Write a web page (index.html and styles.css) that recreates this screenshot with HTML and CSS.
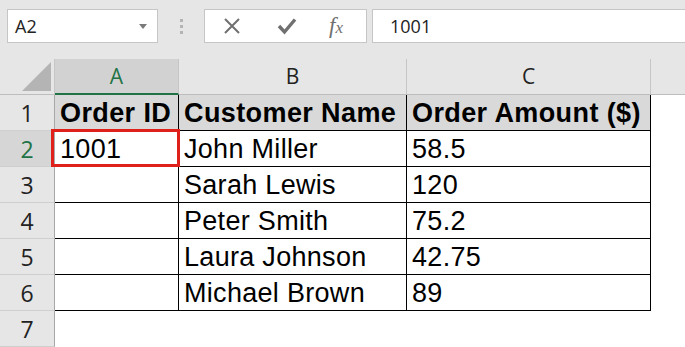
FILE: index.html
```html
<!DOCTYPE html>
<html lang="en">
<head>
    <meta charset="UTF-8">
    <meta name="viewport" content="width=device-width, initial-scale=1.0">
    <title>Orders - Sheet</title>
    <link rel="stylesheet" href="styles.css">
</head>
<body>
    <div class="formula-bar">
        <div class="name-box">
            <span>A2</span>
            <span class="drop-arrow"></span>
        </div>
        <div class="grip">
            <span></span><span></span><span></span>
        </div>
        <div class="fx-buttons">
            <svg class="btn-icon" width="18" height="18" viewBox="0 0 18 18">
                <path d="M2 2 L16 16 M16 2 L2 16" stroke="#707070" stroke-width="2" fill="none"/>
            </svg>
            <svg class="btn-icon" width="20" height="18" viewBox="0 0 20 18">
                <path d="M2 9 L7.5 15 L18 2.5" stroke="#707070" stroke-width="3.4" fill="none"/>
            </svg>
            <span class="fx">f<i>x</i></span>
        </div>
        <div class="formula-input">1001</div>
    </div>

    <div class="sheet">
        <!-- column headers -->
        <div class="corner"><span class="corner-tri"></span></div>
        <div class="col-head selected">A</div>
        <div class="col-head">B</div>
        <div class="col-head">C</div>
        <div class="col-head last"></div>

        <!-- row 1 -->
        <div class="row-head">1</div>
        <div class="cell head first">Order ID</div>
        <div class="cell head">Customer Name</div>
        <div class="cell head">Order Amount ($)</div>
        <div class="blank"></div>

        <!-- row 2 -->
        <div class="row-head selected">2</div>
        <div class="cell first active">1001</div>
        <div class="cell">John Miller</div>
        <div class="cell">58.5</div>
        <div class="blank"></div>

        <div class="row-head">3</div>
        <div class="cell first"></div>
        <div class="cell">Sarah Lewis</div>
        <div class="cell">120</div>
        <div class="blank"></div>

        <div class="row-head">4</div>
        <div class="cell first"></div>
        <div class="cell">Peter Smith</div>
        <div class="cell">75.2</div>
        <div class="blank"></div>

        <div class="row-head">5</div>
        <div class="cell first"></div>
        <div class="cell">Laura Johnson</div>
        <div class="cell">42.75</div>
        <div class="blank"></div>

        <div class="row-head">6</div>
        <div class="cell first"></div>
        <div class="cell">Michael Brown</div>
        <div class="cell">89</div>
        <div class="blank"></div>

        <div class="row-head">7</div>
        <div class="blank"></div>
        <div class="blank"></div>
        <div class="blank"></div>
        <div class="blank"></div>
    </div>
</body>
</html>
```

FILE: styles.css
```css
body {
    margin: 0;
    background-color: #ffffff;
    font-family: "Liberation Sans", Arial, sans-serif;
    overflow: hidden;
}
.formula-bar {
    display: flex;
    align-items: flex-start;
    height: 59px;
    padding: 9px 0 0 7px;
    box-sizing: border-box;
    background-color: #e6e6e6;
}
.name-box {
    width: 151px;
    height: 34px;
    box-sizing: border-box;
    background: white;
    border: 1px solid #c6c6c6;
    display: flex;
    align-items: center;
    justify-content: space-between;
    padding: 0 10px 0 7px;
    font-family: "Open Sans", sans-serif;
    font-size: 18px;
    color: #222;
}
.drop-arrow {
    width: 0;
    height: 0;
    border-left: 4px solid transparent;
    border-right: 4px solid transparent;
    border-top: 5px solid #7a7a7a;
}
.grip {
    width: 46px;
    height: 34px;
    display: flex;
    flex-direction: column;
    align-items: center;
    justify-content: center;
    gap: 3px;
}
.grip span {
    width: 3px;
    height: 3px;
    background: #b4b4b4;
}
.fx-buttons {
    width: 163px;
    height: 34px;
    box-sizing: border-box;
    background: white;
    border: 1px solid #c6c6c6;
    display: flex;
    align-items: center;
    padding-left: 18px;
}
.btn-icon {
    display: block;
}
.btn-icon + .btn-icon {
    margin-left: 36px;
}
.fx {
    margin-left: 32px;
    font-family: "Liberation Serif", serif;
    font-style: italic;
    font-size: 23px;
    color: #707070;
}
.fx i {
    font-size: 17px;
}
.formula-input {
    flex: 1;
    height: 34px;
    margin-left: 5px;
    box-sizing: border-box;
    background: white;
    border: 1px solid #c6c6c6;
    border-right: none;
    padding-left: 17px;
    line-height: 32px;
    font-family: "Open Sans", sans-serif;
    font-size: 18px;
    color: #222;
}
.sheet {
    display: grid;
    grid-template-columns: 55px 124px 228px 244px 1fr;
    grid-auto-rows: 36px;
}
.corner {
    background: #e6e6e6;
    border-right: 1px solid #c6c6c6;
    border-bottom: 1px solid #bdbdbd;
    box-sizing: border-box;
    display: flex;
    align-items: flex-end;
    justify-content: flex-end;
    padding: 0 3px 3px 0;
}
.corner-tri {
    width: 0;
    height: 0;
    border-left: 29px solid transparent;
    border-bottom: 29px solid #b4b4b4;
}
.col-head {
    background: #e6e6e6;
    border-right: 1px solid #c6c6c6;
    border-bottom: 1px solid #bdbdbd;
    box-sizing: border-box;
    text-align: center;
    line-height: 35px;
    font-family: "Open Sans", sans-serif;
    font-size: 21px;
    color: #222;
}
.col-head.selected {
    background: #d2d2d2;
    color: #217346;
    border-bottom: 2px solid #217346;
}
.col-head.last {
    border-right: none;
}
.row-head {
    background: #e6e6e6;
    border-right: 1px solid #a8a8a8;
    border-bottom: 1px solid #cfcfcf;
    box-sizing: border-box;
    text-align: center;
    line-height: 36px;
    font-family: "Open Sans", sans-serif;
    font-size: 23px;
    color: #222;
}
.row-head.selected {
    background: #d6d6d6;
    color: #217346;
}
.cell {
    border-right: 1px solid #000;
    border-bottom: 1px solid #000;
    box-sizing: border-box;
    padding-left: 5px;
    line-height: 36px;
    font-size: 27px;
    letter-spacing: 0.3px;
    color: #000;
    white-space: nowrap;
}
.cell.head {
    background: #d9d9d9;
    font-weight: bold;
    letter-spacing: 0.4px;
}
.cell.active {
    position: relative;
}
.cell.active::after {
    content: "";
    position: absolute;
    left: -4px;
    top: -2px;
    right: -2px;
    bottom: -1px;
    border: 3px solid #e0201b;
}
.blank {
    background: white;
}
```
